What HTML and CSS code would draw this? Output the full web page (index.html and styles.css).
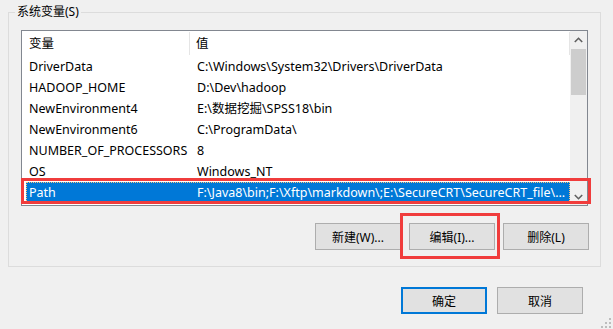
FILE: index.html
```html
<!DOCTYPE html>
<html lang="zh-CN">
    <head>
        <meta charset="UTF-8" />
        <title>环境变量</title>
        <link rel="stylesheet" href="styles.css">
    </head>
    <body>
        <div class="dialog">
            <fieldset class="group">
                <legend>系统变量(S)</legend>
                <div class="listbox">
                    <div class="list">
                        <div class="list-head">
                            <div class="col-name">变量</div>
                            <div class="col-value">值</div>
                        </div>
                        <div class="row"><div class="col-name">DriverData</div><div class="col-value">C:\Windows\System32\Drivers\DriverData</div></div>
                        <div class="row"><div class="col-name">HADOOP_HOME</div><div class="col-value">D:\Dev\hadoop</div></div>
                        <div class="row"><div class="col-name">NewEnvironment4</div><div class="col-value">E:\数据挖掘\SPSS18\bin</div></div>
                        <div class="row"><div class="col-name">NewEnvironment6</div><div class="col-value">C:\ProgramData\</div></div>
                        <div class="row"><div class="col-name">NUMBER_OF_PROCESSORS</div><div class="col-value">8</div></div>
                        <div class="row"><div class="col-name">OS</div><div class="col-value">Windows_NT</div></div>
                        <div class="row selected"><div class="col-name">Path</div><div class="col-value">F:\Java8\bin;F:\Xftp\markdown\;E:\SecureCRT\SecureCRT_file\...</div></div>
                    </div>
                    <div class="scrollbar">
                        <div class="arrow">
                            <svg width="9" height="6" viewBox="0 0 9 6"><polyline points="0.8,5 4.5,1.3 8.2,5" fill="none" stroke="#606060" stroke-width="1.6"/></svg>
                        </div>
                        <div class="track"><div class="thumb"></div></div>
                        <div class="arrow">
                            <svg width="9" height="6" viewBox="0 0 9 6"><polyline points="0.8,1 4.5,4.7 8.2,1" fill="none" stroke="#606060" stroke-width="1.6"/></svg>
                        </div>
                    </div>
                    <!-- annotation around the selected row -->
                    <div class="mark mark-row"></div>
                </div>
                <div class="group-buttons">
                    <button class="btn">新建(W)...</button>
                    <span class="marked">
                        <button class="btn">编辑(I)...</button>
                        <span class="mark mark-btn"></span>
                    </span>
                    <button class="btn">删除(L)</button>
                </div>
            </fieldset>
            <div class="dialog-buttons">
                <button class="btn btn-default">确定</button>
                <button class="btn">取消</button>
            </div>
            <svg class="grip" width="12" height="12" viewBox="0 0 12 12">
                <rect x="9" y="1" width="2" height="2" fill="#bdbdbd"/>
                <rect x="9" y="5" width="2" height="2" fill="#bdbdbd"/>
                <rect x="5" y="5" width="2" height="2" fill="#bdbdbd"/>
                <rect x="9" y="9" width="2" height="2" fill="#bdbdbd"/>
                <rect x="5" y="9" width="2" height="2" fill="#bdbdbd"/>
                <rect x="1" y="9" width="2" height="2" fill="#bdbdbd"/>
            </svg>
        </div>
    </body>
</html>
```

FILE: styles.css
```css
html,
body {
    margin: 0;
    height: 100%;
    background-color: #f0f0f0;
}
body {
    font-family: "Noto Sans", "Noto Sans CJK SC", sans-serif;
    font-size: 12px;
    color: #000;
}
.dialog {
    position: relative;
    height: 100%;
    padding: 4px 0 0 8px;
    box-sizing: border-box;
    overflow: hidden;
}
.group {
    width: 593px;
    margin: 0;
    padding: 0 0 16px 0;
    border: 1px solid #dcdcdc;
    box-sizing: border-box;
    min-inline-size: 0;
}
.group legend {
    margin-left: 6px;
    padding: 0 2px;
    line-height: 16px;
}
.listbox {
    position: relative;
    display: flex;
    width: 567px;
    height: 176px;
    margin: 10px 0 0 12px;
    border: 1px solid #828790;
    background-color: #fff;
    box-sizing: border-box;
}
.list {
    flex: 1;
    overflow: hidden;
    font-size: 12.5px;
}
.list-head {
    display: flex;
    height: 25px;
    line-height: 25px;
}
.list-head .col-name {
    width: 168px;
    padding-left: 7px;
    box-sizing: border-box;
    margin: 1px 0;
    line-height: 23px;
    border-right: 1px solid #e5e5e5;
}
.list-head .col-value {
    flex: 1;
    padding-left: 6px;
    margin: 1px 0;
    line-height: 23px;
    border-right: 1px solid #e5e5e5;
}
.row {
    display: flex;
    height: 21px;
    line-height: 21px;
    margin-left: 4px;
    white-space: nowrap;
}
.row .col-name {
    width: 164px;
    padding-left: 3px;
    box-sizing: border-box;
    overflow: hidden;
}
.row .col-value {
    flex: 1;
    padding-left: 7px;
    overflow: hidden;
}
.row.selected {
    background-color: #0078d7;
    color: #fff;
    outline: 1px dotted #ffc27a;
    outline-offset: -1px;
}
.scrollbar {
    display: flex;
    flex-direction: column;
    width: 17px;
    background-color: #f0f0f0;
}
.arrow {
    display: flex;
    align-items: center;
    justify-content: center;
    height: 17px;
}
.track {
    flex: 1;
    padding: 1px 1px 0 1px;
}
.thumb {
    height: 46px;
    background-color: #cdcdcd;
}
.group-buttons {
    display: flex;
    justify-content: flex-end;
    gap: 8px;
    margin-top: 17px;
    padding-right: 11px;
}
.btn {
    width: 86px;
    height: 27px;
    padding: 0;
    font-family: inherit;
    font-size: 12px;
    color: #000;
    background-color: #e1e1e1;
    border: 1px solid #adadad;
    border-radius: 0;
}
.btn-default {
    border: 2px solid #0078d7;
}
.marked {
    position: relative;
    display: flex;
}
.mark {
    position: absolute;
    border: 3px solid #f03c3c;
    box-sizing: border-box;
}
.mark-row {
    left: -1px;
    top: 147px;
    width: 570px;
    height: 26px;
}
.mark-btn {
    left: -9px;
    top: -10px;
    width: 100px;
    height: 46px;
}
.dialog-buttons {
    display: flex;
    justify-content: flex-end;
    gap: 10px;
    margin-top: 20px;
    padding-right: 30px;
}
.grip {
    position: absolute;
    right: 1px;
    bottom: 0;
}
```
